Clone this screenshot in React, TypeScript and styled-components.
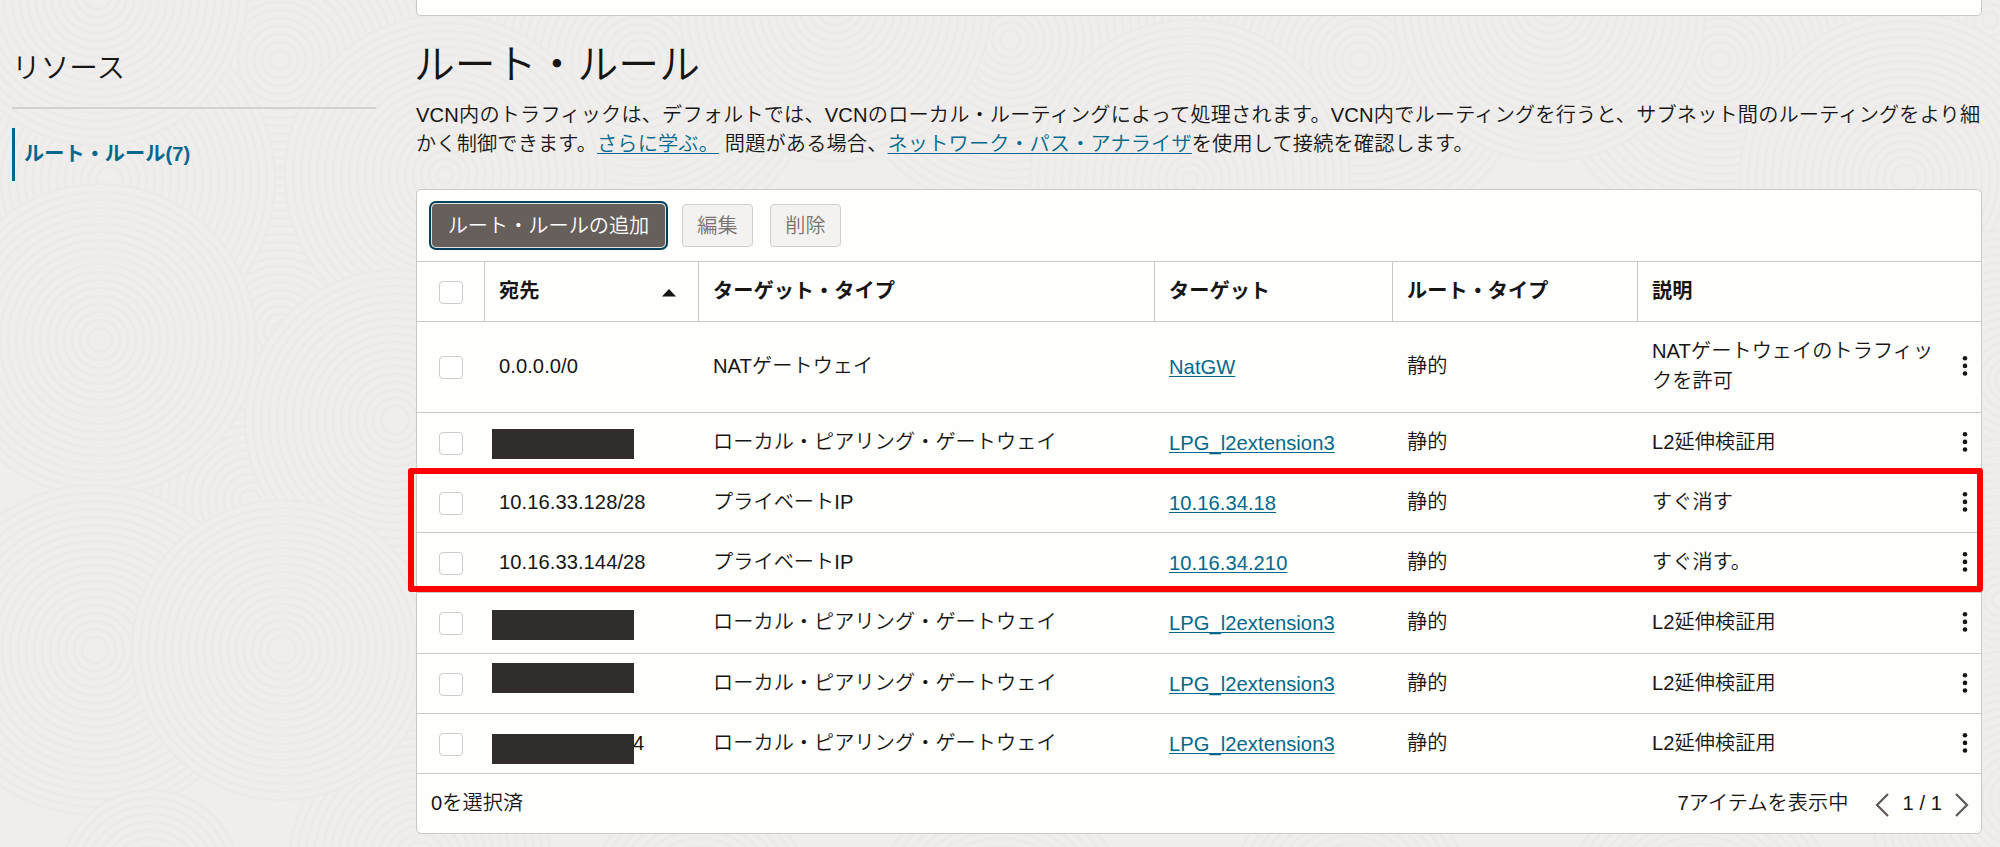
import React from "react";
import styled, { createGlobalStyle, css } from "styled-components";

const Global = createGlobalStyle`
  * { box-sizing: border-box; }
  html, body { margin: 0; height: 847px; overflow: hidden; }
  body {
    background: #efeeed;
    color: #161513;
    font: 350 20.16px/30px "Liberation Sans", "Noto Sans CJK JP", sans-serif;
    letter-spacing: 0.06px;
  }
`;

const LINE = "#cbc8c6";

const Swirls = styled.svg`
  position: absolute;
  inset: 0;
  z-index: -1;
`;

const Page = styled.div`
  position: relative;
  display: grid;
  grid-template-columns: 364px 1566px;
  column-gap: 40px;
  width: 2000px;
  height: 847px;
  padding-left: 12px;
  overflow: hidden;
`;

const Sidebar = styled.aside`
  display: flex;
  flex-direction: column;
`;

const SideTitle = styled.h2`
  margin: 0;
  padding-top: 47px;
  height: 109px;
  border-bottom: 2px solid #d3d1cf;
  font-size: 28.6px;
  line-height: 42px;
  font-weight: 350;
`;

const SideItem = styled.a`
  display: flex;
  align-items: center;
  height: 53px;
  margin-top: 19px;
  padding: 0 0 1px 9px;
  border-left: 3px solid #00688c;
  color: #00688c;
  font-weight: 700;
`;

const Main = styled.main`
  display: flex;
  flex-direction: column;
`;

const PreviousPanel = styled.div`
  height: 16px;
  background: #fefefd;
  border: 1px solid ${LINE};
  border-top: 0;
  border-radius: 0 0 5px 5px;
`;

const Title = styled.h1`
  margin: 19px 0 0 -2px;
  font-size: 40.8px;
  line-height: 60px;
  font-weight: 350;
`;

const Lead = styled.p`
  margin: 6px 0 0;
  height: 88px;
  line-height: 29px;
  letter-spacing: 0.18px;
  white-space: nowrap;
`;

const Link = styled.a`
  color: #00688c;
  text-decoration: underline;
  text-decoration-thickness: 1.3px;
  text-underline-offset: 2px;
  text-decoration-skip-ink: none;
`;

const Panel = styled.section`
  height: 645px;
  background: #fefefd;
  border: 1px solid ${LINE};
  border-radius: 5px;
`;

const Toolbar = styled.div`
  display: flex;
  align-items: center;
  gap: 17px;
  height: 71px;
  padding: 0 15px 0 15px;
`;

const Button = styled.button<{ $primary?: boolean }>`
  height: 43px;
  width: 71px;
  padding: 0;
  border: 1px solid #d2cecb;
  border-radius: 4px;
  background: #f4f2f1;
  color: #78726e;
  font: inherit;
  line-height: 30px;
  ${(p) =>
    p.$primary &&
    css`
      width: 233px;
      border-color: #665f5b;
      background: #665f5b;
      color: #fff;
      box-shadow: 0 0 0 1px #e4e1df, 0 0 0 3px #00405c;
    `}
`;

const Row = styled.div<{ $h: number; $head?: boolean }>`
  display: grid;
  grid-template-columns: 67px 214px 456px 238px 245px 1fr;
  height: ${(p) => p.$h}px;
  border-top: 1px solid ${LINE};
  ${(p) =>
    p.$head &&
    css`
      font-weight: 700;
      & > * + * {
        border-left: 1px solid ${LINE};
      }
    `}
`;

const Cell = styled.div<{ $low?: boolean }>`
  position: relative;
  display: flex;
  align-items: center;
  padding: 0 14px ${(p) => (p.$low ? 0 : 2)}px 15px;
`;

const HeadCell = styled.div`
  display: flex;
  align-items: center;
  padding: 0 14px 2px;
`;

const CheckCell = styled.div`
  display: flex;
  align-items: center;
  padding: 1px 0 0 22px;
`;

const Checkbox = styled.span`
  width: 24px;
  height: 23px;
  border: 1px solid #cfcbc8;
  border-radius: 4px;
  background: #fff;
`;

const SortIcon = styled.svg`
  margin: 4px 8px 0 auto;
`;

const Redaction = styled.span<{ $y: number }>`
  position: absolute;
  left: 8px;
  top: ${(p) => p.$y}px;
  width: 142px;
  height: 30px;
  background: #312d2a;
`;

const Tail = styled.span`
  margin-left: 134px;
`;

const Description = styled.span`
  width: 290px;
`;

const MenuIcon = styled.svg`
  position: absolute;
  right: 13px;
  top: calc(50% - 12px);
`;

const Footer = styled.footer`
  display: flex;
  align-items: center;
  height: 60px;
  padding: 0 12px 2px 14px;
  border-top: 1px solid ${LINE};
`;

const Count = styled.span`
  margin-left: auto;
`;

const Chevron = styled.svg<{ $prev?: boolean }>`
  margin: 4px 0 0 ${(p) => (p.$prev ? 27 : 0)}px;
`;

const PageNumber = styled.span`
  margin: 0 13px;
`;

const Highlight = styled.div`
  position: absolute;
  left: 408px;
  top: 468px;
  width: 1575px;
  height: 124px;
  border: 6px solid #ff0000;
  border-radius: 3px;
`;

type Disc = [number, number, number];
const discs: Disc[] = [
  [280, 60, 170], [280, 330, 160], [640, 60, 180], [1010, 40, 170],
  [1360, 60, 170], [1720, 60, 170], [1990, 20, 120],
  [110, 180, 165], [97, -5, 150], [445, 175, 160], [835, 5, 156],
  [1190, 180, 160], [1550, 5, 156], [1905, 178, 165],
  [2010, 380, 150], [2000, 600, 160], [2020, 800, 150],
  [250, 500, 130], [395, 420, 150], [100, 340, 156], [95, 650, 165],
  [420, 860, 130], [282, 650, 150], [150, 880, 90],
  [700, 900, 110], [1000, 920, 130], [1350, 900, 120], [1700, 920, 140],
];

function Background() {
  return (
    <Swirls width="2000" height="847" viewBox="0 0 2000 847" fill="none">
      {discs.map(([x, y, r], i) => (
        <g key={i} stroke="#ebeae9" strokeWidth="2.4">
          <circle cx={x} cy={y} r={r} fill="#efeeed" />
          {Array.from({ length: Math.floor(r / 8) - 1 }, (_, k) => (
            <circle key={k} cx={x} cy={y} r={r - 8 * (k + 1)} />
          ))}
        </g>
      ))}
    </Swirls>
  );
}

interface Rule {
  h: number;
  dest?: string;
  bar?: number;
  tail?: string;
  type: string;
  target: string;
  desc: string;
}
const LPG = "ローカル・ピアリング・ゲートウェイ";
const rules: Rule[] = [
  { h: 91, dest: "0.0.0.0/0", type: "NATゲートウェイ", target: "NatGW", desc: "NATゲートウェイのトラフィックを許可" },
  { h: 60, bar: 16, type: LPG, target: "LPG_l2extension3", desc: "L2延伸検証用" },
  { h: 60, dest: "10.16.33.128/28", type: "プライベートIP", target: "10.16.34.18", desc: "すぐ消す" },
  { h: 60, dest: "10.16.33.144/28", type: "プライベートIP", target: "10.16.34.210", desc: "すぐ消す。" },
  { h: 61, bar: 17, type: LPG, target: "LPG_l2extension3", desc: "L2延伸検証用" },
  { h: 60, bar: 9, type: LPG, target: "LPG_l2extension3", desc: "L2延伸検証用" },
  { h: 60, bar: 20, tail: "4", type: LPG, target: "LPG_l2extension3", desc: "L2延伸検証用" },
];

export default function App() {
  return (
    <>
      <Global />
      <Page>
        <Background />
        <Sidebar>
          <SideTitle>リソース</SideTitle>
          <SideItem>ルート・ルール(7)</SideItem>
        </Sidebar>
        <Main>
          <PreviousPanel />
          <Title>ルート・ルール</Title>
          <Lead>
            VCN内のトラフィックは、デフォルトでは、VCNのローカル・ルーティングによって処理されます。VCN内でルーティングを行うと、サブネット間のルーティングをより細
            <br />
            かく制御できます。<Link>さらに学ぶ。</Link> 問題がある場合、<Link>ネットワーク・パス・アナライザ</Link>を使用して接続を確認します。
          </Lead>
          <Panel>
            <Toolbar>
              <Button $primary>ルート・ルールの追加</Button>
              <Button>編集</Button>
              <Button>削除</Button>
            </Toolbar>
            <Row $h={60} $head>
              <CheckCell><Checkbox /></CheckCell>
              <HeadCell>
                宛先
                <SortIcon width="14" height="8"><path d="M0 7.5 7 0l7 7.5z" fill="#161513" /></SortIcon>
              </HeadCell>
              <HeadCell>ターゲット・タイプ</HeadCell>
              <HeadCell>ターゲット</HeadCell>
              <HeadCell>ルート・タイプ</HeadCell>
              <HeadCell>説明</HeadCell>
            </Row>
            {rules.map((r, i) => (
              <Row key={i} $h={r.h}>
                <CheckCell><Checkbox /></CheckCell>
                <Cell>
                  {r.dest}
                  {r.tail && <Tail>{r.tail}</Tail>}
                  {r.bar !== undefined && <Redaction $y={r.bar} />}
                </Cell>
                <Cell>{r.type}</Cell>
                <Cell $low><Link>{r.target}</Link></Cell>
                <Cell>静的</Cell>
                <Cell>
                  <Description>{r.desc}</Description>
                  <MenuIcon width="6" height="22" fill="#161513">
                    <circle cx="3" cy="3.3" r="2.3" />
                    <circle cx="3" cy="10.9" r="2.3" />
                    <circle cx="3" cy="18.5" r="2.3" />
                  </MenuIcon>
                </Cell>
              </Row>
            ))}
            <Footer>
              0を選択済
              <Count>7アイテムを表示中</Count>
              <Chevron $prev width="14" height="24" fill="none" stroke="#5f5955" strokeWidth="2.2"><path d="M13 1 2 12l11 11" /></Chevron>
              <PageNumber>1 / 1</PageNumber>
              <Chevron width="14" height="24" fill="none" stroke="#5f5955" strokeWidth="2.2"><path d="m1 1 11 11L1 23" /></Chevron>
            </Footer>
          </Panel>
        </Main>
        <Highlight />
      </Page>
    </>
  );
}
